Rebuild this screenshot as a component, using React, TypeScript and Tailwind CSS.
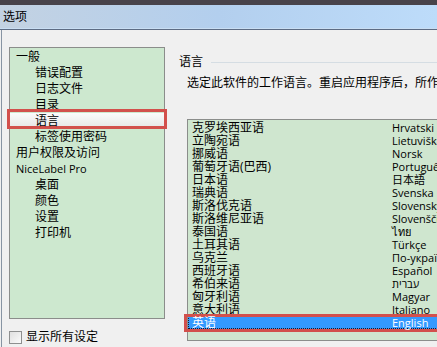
import React from 'react';

const tree = [
  { label: '一般', child: false },
  { label: '错误配置', child: true },
  { label: '日志文件', child: true },
  { label: '目录', child: true },
  { label: '语言', child: true, selected: true },
  { label: '标签使用密码', child: true },
  { label: '用户权限及访问', child: false },
  { label: 'NiceLabel Pro', child: false, latin: true },
  { label: '桌面', child: true },
  { label: '颜色', child: true },
  { label: '设置', child: true },
  { label: '打印机', child: true },
];

const languages = [
  ['克罗埃西亚语', 'Hrvatski'],
  ['立陶宛语', 'Lietuviškai'],
  ['挪威语', 'Norsk'],
  ['葡萄牙语(巴西)', 'Português'],
  ['日本语', '日本語'],
  ['瑞典语', 'Svenska'],
  ['斯洛伐克语', 'Slovenský'],
  ['斯洛维尼亚语', 'Slovenščina'],
  ['泰国语', 'ไทย'],
  ['土耳其语', 'Türkçe'],
  ['乌克兰', 'По-українськи'],
  ['西班牙语', 'Español'],
  ['希伯来语', 'עברית'],
  ['匈牙利语', 'Magyar'],
  ['意大利语', 'Italiano'],
  ['英语', 'English'],
];

const App: React.FC = () => {
  return (
    <div className="w-[437px] h-[347px] overflow-hidden bg-[#f0f0f0] text-[12px] text-black font-['Open_Sans','Noto_Sans_CJK_SC','DejaVu_Sans',sans-serif]">
      {/* title bar */}
      <div className="h-[30px] flex flex-col">
        <div className="h-[5px] bg-[#48434a]" />
        <div className="h-[24px] flex items-center pl-[3px] bg-gradient-to-r from-[#c3d2e2] via-[#b3cfee] to-[#bddcfa] border-b border-[#c9def3]">
          选项
        </div>
        <div className="h-px bg-[#5d6c84]" />
      </div>

      <div className="flex h-[317px] ml-[1px] border-l border-[#8794a3]">
        {/* left column */}
        <div className="w-[163px] pl-[7px] pt-[17px] shrink-0">
          <div className="w-[156px] h-[272px] border border-[#8b8d8b] bg-[#cde8cf] pt-px">
            {tree.map((t) => (
              <div
                key={t.label}
                className={`relative h-4 leading-4 whitespace-nowrap ${t.child ? 'pl-[25px]' : 'pl-[6px]'} ${
                  t.latin ? 'text-[11px]' : ''
                } ${t.selected ? 'bg-gradient-to-b from-[#fbfbfb] to-[#e4e4e4]' : ''}`}
              >
                {t.selected && (
                  <div className="absolute -left-[3px] -right-[3px] -top-[4px] bottom-0 border-[3px] border-[#d2504c]" />
                )}
                <span className="relative">{t.label}</span>
              </div>
            ))}
          </div>
          <div className="flex items-center mt-[11px] h-[14px]">
            <div className="w-[13px] h-[13px] border border-[#8e8f8f] bg-gradient-to-br from-[#e0e0e0] to-[#fafafa]" />
            <span className="ml-[4px]">显示所有设定</span>
          </div>
        </div>

        {/* right column */}
        <div className="flex-1 pt-[24px]">
          <div className="flex items-center h-4 pl-[14px]">
            <span>语言</span>
            <div className="flex-1 h-px bg-[#d5dde3] ml-[8px]" />
          </div>
          <div className="h-4 leading-4 mt-[5px] pl-[22px] whitespace-nowrap">
            选定此软件的工作语言。重启应用程序后，所作的更改才会生效。
          </div>
          <div className="ml-[22px] mt-[28px] w-[300px] h-[222px] border border-[#8b8d8b] bg-[#cfe6cf] pt-px">
            {languages.map(([zh, native], i) => {
              const sel = i === languages.length - 1;
              return (
                <div
                  key={zh}
                  className={`relative grid grid-cols-[204px_1fr] h-[13px] leading-[13px] whitespace-nowrap ${
                    sel ? 'bg-[#3399ff] text-white' : ''
                  }`}
                >
                  {sel && (
                    <>
                      <div className="absolute inset-0 border border-dotted border-[#1a1a2a]" />
                      <div className="absolute -left-[4px] -right-[4px] -top-[2px] -bottom-[3px] border-[3px] border-[#d2504c]" />
                    </>
                  )}
                  <span className="relative pl-[4px]">{zh}</span>
                  <span className="relative text-[11px]">{native}</span>
                </div>
              );
            })}
          </div>
        </div>
      </div>
    </div>
  );
};

export default App;
